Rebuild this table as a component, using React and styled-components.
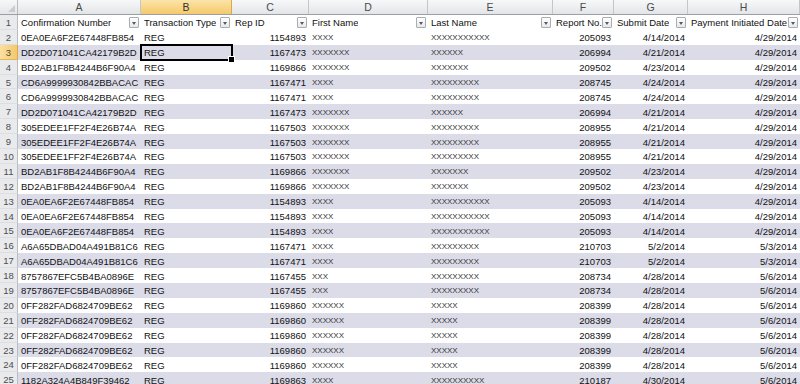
import React from 'react';
import styled, { createGlobalStyle, css } from 'styled-components';

const TEMPLATE = '18px 123px 91px 77px 119px 125px 61px 74px 112px';
const ROW_H = 14.9;

const columns = [
	{ letter: 'A', label: 'Confirmation Number', align: 'left' },
	{ letter: 'B', label: 'Transaction Type', align: 'left' },
	{ letter: 'C', label: 'Rep ID', align: 'right' },
	{ letter: 'D', label: 'First Name', align: 'left', small: true },
	{ letter: 'E', label: 'Last Name', align: 'left', small: true },
	{ letter: 'F', label: 'Report No.', align: 'right' },
	{ letter: 'G', label: 'Submit Date', align: 'right' },
	{ letter: 'H', label: 'Payment Initiated Date', align: 'right' },
];

const x = n => 'X'.repeat(n);

const r1 = ['0EA0EA6F2E67448FB854', 'REG', '1154893', x(4), x(11), '205093', '4/14/2014', '4/29/2014'];
const r2 = ['DD2D071041CA42179B2D', 'REG', '1167473', x(7), x(6), '206994', '4/21/2014', '4/29/2014'];
const r3 = ['BD2AB1F8B4244B6F90A4', 'REG', '1169866', x(7), x(7), '209502', '4/23/2014', '4/29/2014'];
const r4 = ['CD6A9999930842BBACAC', 'REG', '1167471', x(4), x(9), '208745', '4/24/2014', '4/29/2014'];
const r5 = ['305EDEE1FF2F4E26B74A', 'REG', '1167503', x(7), x(9), '208955', '4/21/2014', '4/29/2014'];
const r6 = ['A6A65DBAD04A491B81C6', 'REG', '1167471', x(4), x(9), '210703', '5/2/2014', '5/3/2014'];
const r7 = ['8757867EFC5B4BA0896E', 'REG', '1167455', x(3), x(9), '208734', '4/28/2014', '5/6/2014'];
const r8 = ['0FF282FAD6824709BE62', 'REG', '1169860', x(6), x(5), '208399', '4/28/2014', '5/6/2014'];
const r9 = ['1182A324A4B849F39462', 'REG', '1169863', x(4), x(10), '210187', '4/30/2014', '5/6/2014'];

const data = [r1, r2, r3, r4, r4, r2, r5, r5, r5, r3, r3, r1, r1, r1, r6, r6, r7, r7, r8, r8, r8, r8, r8, r9];

const SELECTED_ROW = 3;
const SELECTED_COL = 1;

function App() {
	return (
		<>
			<GlobalStyle />
			<Sheet>
				<LetterStrip>
					<Corner />
					{columns.map((c, i) => (
						<ColLetter key={c.letter} $selected={i === SELECTED_COL}>
							{c.letter}
						</ColLetter>
					))}
				</LetterStrip>
				<Row>
					<RowNum>1</RowNum>
					{columns.map(c => (
						<HeadCell key={c.letter}>
							<HeadText>{c.label}</HeadText>
							<FilterButton />
						</HeadCell>
					))}
				</Row>
				{data.map((row, i) => {
					const num = i + 2;
					return (
						<Row key={num} $band={num % 2 === 1}>
							<RowNum $selected={num === SELECTED_ROW}>{num}</RowNum>
							{row.map((val, j) => (
								<Cell
									key={j}
									$align={columns[j].align}
									$small={columns[j].small}
								>
									{val}
									{num === SELECTED_ROW && j === SELECTED_COL && (
										<Selection>
											<FillHandle />
										</Selection>
									)}
								</Cell>
							))}
						</Row>
					);
				})}
			</Sheet>
		</>
	);
}

const GlobalStyle = createGlobalStyle`
	body {
		margin: 0;
		background: #ffffff;
		overflow: hidden;
	}
`;

const Sheet = styled.div`
	width: 800px;
	height: 384px;
	overflow: hidden;
	font-family: 'Liberation Sans', Arial, sans-serif;
	color: #111;
`;

const LetterStrip = styled.div`
	display: grid;
	grid-template-columns: ${TEMPLATE};
	height: 15px;
	box-sizing: border-box;
	border-bottom: 1px solid #9c9fa3;
`;

const Corner = styled.div`
	position: relative;
	background: linear-gradient(#f6f7f8, #e4e6e9);
	border-right: 1px solid #b9bcc0;

	&::after {
		content: '';
		position: absolute;
		right: 2px;
		bottom: 2px;
		border-style: solid;
		border-width: 0 0 7px 7px;
		border-color: transparent transparent #c9cccf transparent;
	}
`;

const ColLetter = styled.div`
	display: flex;
	align-items: center;
	justify-content: center;
	font-size: 10.5px;
	color: #4a4a4a;
	box-sizing: border-box;
	border-right: 1px solid #c3c6ca;
	background: linear-gradient(#f7f8f9, #e2e5e8);
	${p =>
		p.$selected &&
		css`
			background: linear-gradient(#fbe4a8, #f5c96c);
			border-right-color: #d9a94c;
			color: #333;
		`}
`;

const Row = styled.div`
	display: grid;
	grid-template-columns: ${TEMPLATE};
	height: ${ROW_H}px;
	background: ${p => (p.$band ? '#dcdce9' : '#ffffff')};
`;

const RowNum = styled.div`
	display: flex;
	align-items: center;
	justify-content: center;
	padding-top: 1px;
	box-sizing: border-box;
	font-size: 9.5px;
	color: #4d4d4d;
	background: ${p => (p.$selected ? 'linear-gradient(90deg, #fbe0a0, #f5c86a)' : '#e9eaec')};
	border-right: 1px solid ${p => (p.$selected ? '#d9a94c' : '#b9bcc0')};
	border-bottom: 1px solid ${p => (p.$selected ? '#e2b762' : '#dcdee1')};
`;

const Cell = styled.div`
	position: relative;
	display: flex;
	align-items: center;
	justify-content: ${p => (p.$align === 'right' ? 'flex-end' : 'flex-start')};
	padding: 1px ${p => (p.$align === 'right' ? '3px' : '0')} 0 ${p => (p.$align === 'right' ? '0' : '3px')};
	box-sizing: border-box;
	min-width: 0;
	white-space: nowrap;
	font-size: ${p => (p.$small ? '8px' : '9.5px')};
	color: ${p => (p.$small ? '#333' : '#111')};
`;

const HeadCell = styled.div`
	display: flex;
	align-items: center;
	justify-content: space-between;
	padding: 1px 2px 0 3px;
	box-sizing: border-box;
	min-width: 0;
	font-size: 9.5px;
	color: #111;
`;

const HeadText = styled.span`
	white-space: nowrap;
	overflow: hidden;
`;

const FilterButton = styled.span`
	position: relative;
	flex: none;
	width: 10px;
	height: 11px;
	box-sizing: border-box;
	border: 1px solid #a9adb2;
	border-radius: 1px;
	background: linear-gradient(#ffffff, #e6e8eb);

	&::after {
		content: '';
		position: absolute;
		left: 2px;
		top: 4px;
		border-style: solid;
		border-width: 3px 2.5px 0 2.5px;
		border-color: #5a5a5a transparent transparent transparent;
	}
`;

const Selection = styled.span`
	position: absolute;
	left: -1px;
	top: -1px;
	right: -1px;
	bottom: -1px;
	border: 2px solid #000;
	pointer-events: none;
`;

const FillHandle = styled.span`
	position: absolute;
	right: -4px;
	bottom: -4px;
	width: 5px;
	height: 5px;
	background: #000;
	border: 1px solid #fff;
`;

export default App;
